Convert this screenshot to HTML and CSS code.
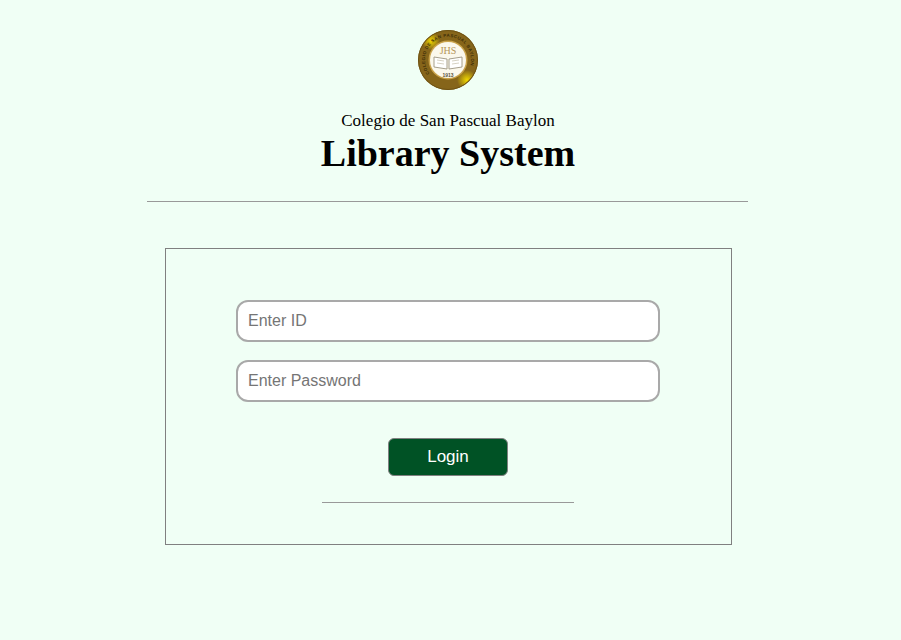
FILE: index.html
```html
<!DOCTYPE html>
<html lang="en">
<head>
<meta charset="utf-8">
<title>Library System</title>
<link rel="stylesheet" href="styles.css">
</head>
<body>
<main class="page">
  <header class="head">
    <svg class="logo" width="60" height="60" viewBox="0 0 60 60" aria-label="School seal">
      <defs>
        <radialGradient id="shine-a" cx=".5" cy=".5" r=".5">
          <stop offset="0" stop-color="#f0d800"/>
          <stop offset="1" stop-color="#f0d800" stop-opacity="0"/>
        </radialGradient>
        <clipPath id="seal-clip"><circle cx="30" cy="30" r="29.5"/></clipPath>
        <path id="arc" d="M11.500 43.500A23 23 0 1 1 48.500 43.500"/>
      </defs>
      <circle cx="30" cy="30" r="30" fill="#86651a"/>
      <g clip-path="url(#seal-clip)">
        <circle cx="13" cy="11" r="9" fill="url(#shine-a)"/>
        <circle cx="49" cy="50" r="10" fill="url(#shine-a)"/>
      </g>
      <circle cx="30" cy="30" r="29.500" fill="none" stroke="#6e5214" stroke-width="1"/>
      <text class="seal-arc"><textPath href="#arc" textLength="92">COLEGIO DE SAN PASCUAL BAYLON</textPath></text>
      <circle cx="30" cy="30" r="19.500" fill="#c9a24a"/>
      <circle cx="30" cy="30" r="18" fill="#fbf8ec"/>
      <text x="30" y="23.500" class="seal-jhs" text-anchor="middle">JHS</text>
      <path d="M16 27l13 2v10l-13-2zM44 27l-13 2v10l13-2z" fill="#fff" stroke="#9c9480" stroke-width=".9"/>
      <path d="M19 30l7 1M19 33l7 1M34 31l7-1M34 34l7-1" stroke="#c4bda8" stroke-width=".7"/>
      <text x="30" y="46.500" class="seal-year" text-anchor="middle">1913</text>
    </svg>
    <p class="school">Colegio de San Pascual Baylon</p>
    <h1 class="title">Library System</h1>
    <hr class="rule-top">
  </header>
  <form class="card">
    <input class="field" type="text" placeholder="Enter ID">
    <input class="field" type="password" placeholder="Enter Password">
    <button class="login" type="button">Login</button>
    <hr class="rule-bottom">
  </form>
</main>
</body>
</html>
```
FILE: styles.css
```css
html, body {
  margin: 0;
  height: 100%;
  background: #f0fff5;
  color: #000;
  font-family: "Liberation Serif", serif;
}
.page {
  width: 896px;
  display: flex;
  flex-direction: column;
  align-items: center;
}
.head {
  display: flex;
  flex-direction: column;
  align-items: center;
  padding-top: 30px;
}
.logo {
  display: block;
  margin-bottom: 21px;
}
.seal-arc { font: bold 4.4px "Liberation Sans", sans-serif; fill: #3f2f08; }
.seal-jhs { font: 10px "Liberation Serif", serif; fill: #b4965a; }
.seal-year { font: bold 5px "Liberation Sans", sans-serif; fill: #5a5240; }
.school {
  margin: 0;
  font-size: 17px;
  line-height: 20px;
}
.title {
  margin: 0;
  font-size: 38px;
  line-height: 44px;
  font-weight: bold;
}
.rule-top {
  width: 601px;
  margin: 26px 1px 46px 0;
  border: 0;
  border-top: 1px solid #999;
}
.card {
  box-sizing: border-box;
  width: 567px;
  height: 297px;
  border: 1px solid #808080;
  display: flex;
  flex-direction: column;
  align-items: center;
  padding-top: 51px;
}
.field {
  box-sizing: border-box;
  width: 424px;
  height: 42px;
  margin-bottom: 18px;
  padding: 0 10px;
  border: 2px solid #a9a9a9;
  border-radius: 12px;
  background: #fff;
  font: 16px "Liberation Sans", Arial, sans-serif;
  outline: none;
}
.field::placeholder { color: #757575; opacity: 1; }
.login {
  box-sizing: border-box;
  width: 120px;
  height: 38px;
  margin-top: 18px;
  border: 1px solid #808080;
  border-radius: 6px;
  background: #005225;
  color: #fff;
  font: 17px "Liberation Sans", Arial, sans-serif;
}
.rule-bottom {
  width: 252px;
  margin: 26px 0 0;
  border: 0;
  border-top: 1px solid #999;
}
```
